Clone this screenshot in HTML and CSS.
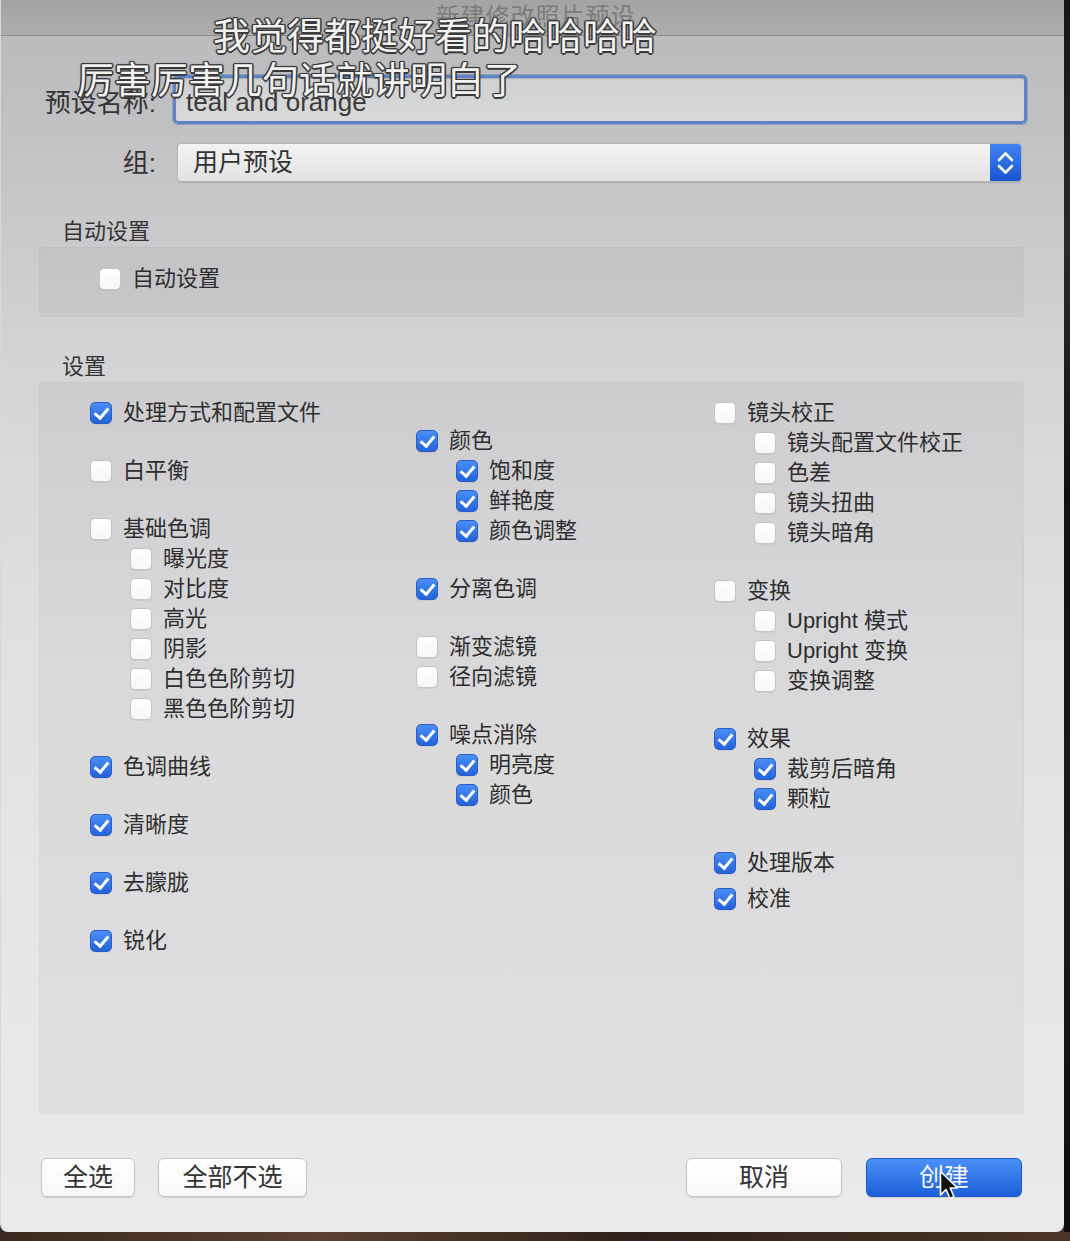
FILE: index.html
```html
<!DOCTYPE html>
<html lang="zh-CN">
<head>
<meta charset="utf-8">
<title>新建修改照片预设</title>
<link rel="stylesheet" href="styles.css">
</head>
<body>
<div class="screen">
  <div class="dialog">
    <div class="titlebar"><span class="title">新建修改照片预设</span></div>
    <div class="body">
      <div class="field-row row-name">
        <span class="field-label">预设名称:</span>
        <div class="text-input">teal and orange</div>
      </div>
      <div class="field-row row-group">
        <span class="field-label">组:</span>
        <div class="select">
          <span class="select-value">用户预设</span>
          <span class="stepper">
            <svg width="31" height="39" viewBox="0 0 31 39"><path d="M9 17 L15.5 10.5 L22 17 M9 23 L15.5 29.5 L22 23" fill="none" stroke="#fff" stroke-width="2.6" stroke-linecap="round" stroke-linejoin="round"/></svg>
          </span>
        </div>
      </div>

      <div class="section-label">自动设置</div>
      <div class="group-box auto-box">
        <div class="item"><span class="cb"></span><span>自动设置</span></div>
      </div>

      <div class="section-label">设置</div>
      <div class="group-box settings-box">
        <div class="col">
          <div class="item"><span class="cb on"></span><span>处理方式和配置文件</span></div>
          <div class="item gap"><span class="cb"></span><span>白平衡</span></div>
          <div class="item gap"><span class="cb"></span><span>基础色调</span></div>
          <div class="item sub"><span class="cb"></span><span>曝光度</span></div>
          <div class="item sub"><span class="cb"></span><span>对比度</span></div>
          <div class="item sub"><span class="cb"></span><span>高光</span></div>
          <div class="item sub"><span class="cb"></span><span>阴影</span></div>
          <div class="item sub"><span class="cb"></span><span>白色色阶剪切</span></div>
          <div class="item sub"><span class="cb"></span><span>黑色色阶剪切</span></div>
          <div class="item gap"><span class="cb on"></span><span>色调曲线</span></div>
          <div class="item gap"><span class="cb on"></span><span>清晰度</span></div>
          <div class="item gap"><span class="cb on"></span><span>去朦胧</span></div>
          <div class="item gap"><span class="cb on"></span><span>锐化</span></div>
        </div>
        <div class="col col-mid">
          <div class="item"><span class="cb on"></span><span>颜色</span></div>
          <div class="item sub"><span class="cb on"></span><span>饱和度</span></div>
          <div class="item sub"><span class="cb on"></span><span>鲜艳度</span></div>
          <div class="item sub"><span class="cb on"></span><span>颜色调整</span></div>
          <div class="item gap"><span class="cb on"></span><span>分离色调</span></div>
          <div class="item gap"><span class="cb"></span><span>渐变滤镜</span></div>
          <div class="item"><span class="cb"></span><span>径向滤镜</span></div>
          <div class="item gap"><span class="cb on"></span><span>噪点消除</span></div>
          <div class="item sub"><span class="cb on"></span><span>明亮度</span></div>
          <div class="item sub"><span class="cb on"></span><span>颜色</span></div>
        </div>
        <div class="col">
          <div class="item"><span class="cb"></span><span>镜头校正</span></div>
          <div class="item sub"><span class="cb"></span><span>镜头配置文件校正</span></div>
          <div class="item sub"><span class="cb"></span><span>色差</span></div>
          <div class="item sub"><span class="cb"></span><span>镜头扭曲</span></div>
          <div class="item sub"><span class="cb"></span><span>镜头暗角</span></div>
          <div class="item gap"><span class="cb"></span><span>变换</span></div>
          <div class="item sub"><span class="cb"></span><span>Upright 模式</span></div>
          <div class="item sub"><span class="cb"></span><span>Upright 变换</span></div>
          <div class="item sub"><span class="cb"></span><span>变换调整</span></div>
          <div class="item gap"><span class="cb on"></span><span>效果</span></div>
          <div class="item sub"><span class="cb on"></span><span>裁剪后暗角</span></div>
          <div class="item sub"><span class="cb on"></span><span>颗粒</span></div>
          <div class="item gap-lg"><span class="cb on"></span><span>处理版本</span></div>
          <div class="item gap-sm"><span class="cb on"></span><span>校准</span></div>
        </div>
      </div>

      <div class="buttons">
        <div class="btn-group">
          <div class="btn w-94">全选</div>
          <div class="btn w-149">全部不选</div>
        </div>
        <div class="btn-group">
          <div class="btn w-156">取消</div>
          <div class="btn w-156 primary">创建</div>
        </div>
      </div>
    </div>
  </div>
  <div class="right-edge"></div>

  <div class="subtitle sub1">我觉得都挺好看的哈哈哈哈</div>
  <div class="subtitle sub2">厉害厉害几句话就讲明白了</div>
  <svg class="cursor" width="22" height="32" viewBox="0 0 22 32"><path d="M1.5 1.5 L1.5 25 L7 19.5 L11 28.5 L15 26.8 L11.2 18 L18.5 18 Z" fill="#111" stroke="#fff" stroke-width="1.6" stroke-linejoin="round"/></svg>
</div>
</body>
</html>
```

FILE: styles.css
```css
* { box-sizing: border-box; }

html, body {
  margin: 0;
  padding: 0;
}

body {
  width: 1070px;
  height: 1241px;
  overflow: hidden;
  background: linear-gradient(to right, #3b2a1f, #5a4030 30%, #2e2119 60%, #4b3526);
  font-family: "Liberation Sans", "Noto Sans CJK SC", sans-serif;
  color: #2c2c2c;
}

.screen {
  position: relative;
  width: 1070px;
  height: 1241px;
  display: flex;
  align-items: flex-start;
}

.right-edge {
  flex: 1;
  height: 1232px;
  background: linear-gradient(to bottom, #151515, #2a2a2a 20%, #111 40%, #1c1c1c 70%, #0e0e0e);
}

.dialog {
  width: 1064px;
  height: 1232px;
  display: flex;
  flex-direction: column;
  border-radius: 0 0 8px 8px;
  overflow: hidden;
  background: linear-gradient(to bottom, #b9b8ba 0px, #c2c1c3 140px, #d4d4d6 360px, #e0e0e2 650px, #e6e6e8 950px, #eaeaec 1232px);
  border-left: 1px solid #d8d8d8;
}

.titlebar {
  height: 36px;
  flex: none;
  background: linear-gradient(to bottom, #a3a3a3, #adadad);
  border-bottom: 1px solid #8d8d8d;
  display: flex;
  justify-content: center;
  align-items: flex-end;
}

.title {
  font-size: 24px;
  line-height: 30px;
  color: #6e6e6e;
  margin-left: 6px;
  margin-bottom: 3px;
  letter-spacing: 1px;
  opacity: 0.75;
}

.body {
  flex: 1;
  display: flex;
  flex-direction: column;
  padding-top: 39px;
}

.field-row {
  display: grid;
  grid-template-columns: 155px 1fr;
  align-items: center;
}

.row-name {
  column-gap: 17px;
  padding-right: 37px;
}

.row-group {
  column-gap: 21px;
  padding-right: 42px;
  margin-top: 19px;
}

.field-label {
  text-align: right;
  font-size: 26px;
  line-height: 30px;
  color: #333;
}

.row-name .field-label {
  margin-top: 6px;
}

.text-input {
  height: 49px;
  border: 3px solid #5e84c6;
  border-radius: 5px;
  background: linear-gradient(to bottom, #cfd1d2, #d9d9d9);
  box-shadow: 0 0 0 1px rgba(70, 100, 160, 0.35), inset 0 1px 1px rgba(0,0,0,0.15);
  padding-left: 10px;
  padding-top: 4px;
  font-size: 26px;
  line-height: 40px;
  color: #3a3a3a;
  display: flex;
  align-items: center;
}

.select {
  height: 39px;
  display: flex;
  align-items: stretch;
  border: 1px solid #b4b4b4;
  border-radius: 4px;
  background: linear-gradient(to bottom, #f3f3f3, #e2e2e2);
  box-shadow: 0 1px 1px rgba(0,0,0,0.12);
  overflow: hidden;
}

.select-value {
  flex: 1;
  padding-left: 15px;
  font-size: 25px;
  line-height: 37px;
  color: #333;
}

.stepper {
  width: 31px;
  flex: none;
  background: linear-gradient(to bottom, #3f82f2, #1b56d2);
  display: flex;
  align-items: center;
  justify-content: center;
}

.stepper svg {
  display: block;
}

.section-label {
  margin-top: 35px;
  padding-left: 61px;
  font-size: 22px;
  line-height: 30px;
  color: #333;
}

.group-box {
  margin: 0 40px 0 38px;
  background: rgba(0, 0, 0, 0.035);
  border: 1px solid rgba(0, 0, 0, 0.025);
  border-radius: 4px;
}

.auto-box {
  height: 70px;
  padding: 16px 0 0 59px;
}

.settings-box {
  height: 732px;
  padding: 15px 0 0 50px;
  display: grid;
  grid-template-columns: 326px 298px 1fr;
  align-items: start;
}

.col {
  display: flex;
  flex-direction: column;
}

.col-mid {
  padding-top: 28px;
}

.item {
  display: flex;
  align-items: center;
  gap: 11px;
  height: 30px;
  font-size: 22px;
  line-height: 30px;
  color: #2e2e2e;
  white-space: nowrap;
}

.item.sub { margin-left: 40px; }
.item.gap { margin-top: 28px; }
.item.gap-lg { margin-top: 34px; }
.item.gap-sm { margin-top: 6px; }

.cb {
  width: 22px;
  height: 22px;
  flex: none;
  border-radius: 5px;
  background: linear-gradient(to bottom, #ffffff, #f6f6f6);
  border: 1px solid #c4c4c6;
  box-shadow: 0 1px 1px rgba(0,0,0,0.06);
  position: relative;
}

.cb.on {
  background: linear-gradient(to bottom, #4a8ef6, #2463da);
  border: 1px solid #2a5cc4;
}

.cb.on::after {
  content: "";
  position: absolute;
  left: 6px;
  top: 2px;
  width: 6px;
  height: 11px;
  border-right: 3px solid #fff;
  border-bottom: 3px solid #fff;
  transform: rotate(40deg);
}

.buttons {
  margin-top: 44px;
  padding: 0 42px 0 40px;
  display: flex;
  justify-content: space-between;
}

.btn-group {
  display: flex;
  gap: 23px;
}

.btn-group + .btn-group {
  gap: 24px;
}

.btn {
  height: 39px;
  border-radius: 6px;
  background: linear-gradient(to bottom, #ffffff, #f7f7f7);
  border: 1px solid #c6c6c6;
  box-shadow: 0 1px 1px rgba(0,0,0,0.12);
  font-size: 25px;
  line-height: 37px;
  text-align: center;
  color: #333;
}

.w-94 { width: 94px; }
.w-149 { width: 149px; }
.w-156 { width: 156px; }

.btn.primary {
  background: linear-gradient(to bottom, #4b8ff7, #1d5fd9);
  border: 1px solid #2357c4;
  color: #f4f8ff;
}

.subtitle {
  position: absolute;
  font-family: "Noto Sans CJK SC", sans-serif;
  font-size: 37px;
  line-height: 40px;
  color: #f2f2f2;
  white-space: nowrap;
  text-shadow:
    1.5px 0 0 #3a3a3a, -1.5px 0 0 #3a3a3a, 0 1.5px 0 #3a3a3a, 0 -1.5px 0 #3a3a3a,
    1px 1px 0 #3a3a3a, -1px -1px 0 #3a3a3a, 1px -1px 0 #3a3a3a, -1px 1px 0 #3a3a3a,
    0 0 3px rgba(0,0,0,0.5);
}

.sub1 { left: 213px; top: 14px; }
.sub2 { left: 77px; top: 58px; }

.cursor {
  position: absolute;
  left: 939px;
  top: 1170px;
}
```
